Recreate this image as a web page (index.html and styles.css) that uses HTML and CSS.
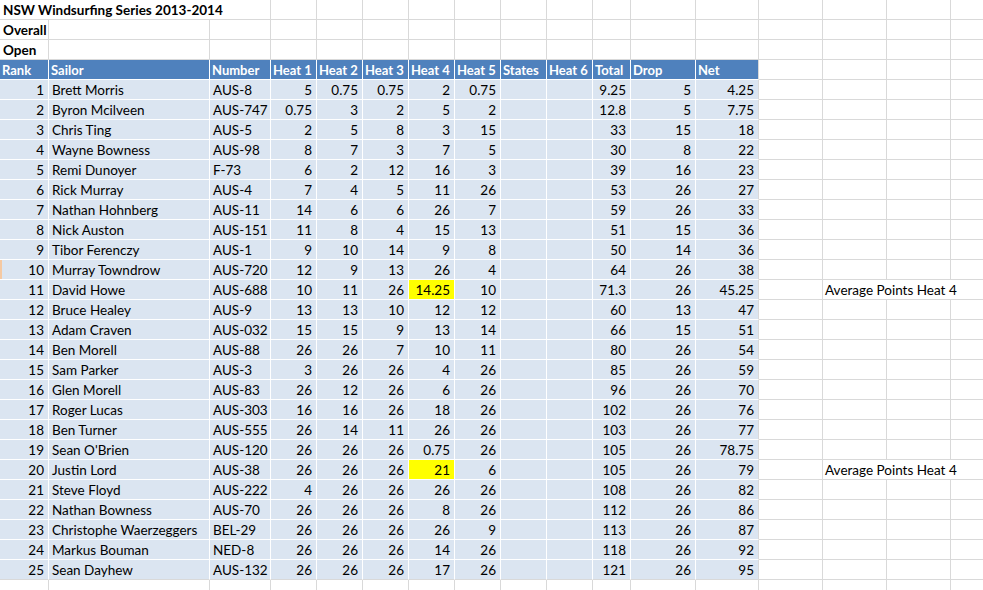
FILE: index.html
```html
<!DOCTYPE html>
<html>
<head>
<meta charset="utf-8">
<link rel="stylesheet" href="styles.css">
</head>
<body>
<div class="sheet" id="sheet">
  <div class="row">
    <div class="c b span3">NSW Windsurfing Series 2013-2014</div>
    <div class="c"></div><div class="c"></div><div class="c"></div><div class="c"></div><div class="c"></div><div class="c"></div><div class="c"></div><div class="c"></div><div class="c"></div><div class="c"></div><div class="c"></div><div class="c"></div><div class="c"></div><div class="c"></div>
  </div>
  <div class="row">
    <div class="c b">Overall</div>
    <div class="c"></div><div class="c"></div><div class="c"></div><div class="c"></div><div class="c"></div><div class="c"></div><div class="c"></div><div class="c"></div><div class="c"></div><div class="c"></div><div class="c"></div><div class="c"></div><div class="c"></div><div class="c"></div><div class="c"></div><div class="c"></div>
  </div>
  <div class="row">
    <div class="c b">Open</div>
    <div class="c"></div><div class="c"></div><div class="c"></div><div class="c"></div><div class="c"></div><div class="c"></div><div class="c"></div><div class="c"></div><div class="c"></div><div class="c"></div><div class="c"></div><div class="c"></div><div class="c"></div><div class="c"></div><div class="c"></div><div class="c"></div>
  </div>
  <div class="row">
    <div class="c h">Rank</div><div class="c h">Sailor</div><div class="c h">Number</div><div class="c h">Heat 1</div><div class="c h">Heat 2</div><div class="c h">Heat 3</div><div class="c h">Heat 4</div><div class="c h">Heat 5</div><div class="c h">States</div><div class="c h">Heat 6</div><div class="c h">Total</div><div class="c h">Drop</div><div class="c h last">Net</div>
    <div class="c"></div><div class="c"></div><div class="c"></div><div class="c"></div>
  </div>
  <div class="row"><div class="c d n">1</div><div class="c d">Brett Morris</div><div class="c d">AUS-8</div><div class="c d n">5</div><div class="c d n">0.75</div><div class="c d n">0.75</div><div class="c d n">2</div><div class="c d n">0.75</div><div class="c d n"></div><div class="c d n"></div><div class="c d n">9.25</div><div class="c d n">5</div><div class="c d n last">4.25</div><div class="c"></div><div class="c"></div><div class="c"></div><div class="c"></div></div>
  <div class="row"><div class="c d n">2</div><div class="c d">Byron Mcilveen</div><div class="c d">AUS-747</div><div class="c d n">0.75</div><div class="c d n">3</div><div class="c d n">2</div><div class="c d n">5</div><div class="c d n">2</div><div class="c d n"></div><div class="c d n"></div><div class="c d n">12.8</div><div class="c d n">5</div><div class="c d n last">7.75</div><div class="c"></div><div class="c"></div><div class="c"></div><div class="c"></div></div>
  <div class="row"><div class="c d n">3</div><div class="c d">Chris Ting</div><div class="c d">AUS-5</div><div class="c d n">2</div><div class="c d n">5</div><div class="c d n">8</div><div class="c d n">3</div><div class="c d n">15</div><div class="c d n"></div><div class="c d n"></div><div class="c d n">33</div><div class="c d n">15</div><div class="c d n last">18</div><div class="c"></div><div class="c"></div><div class="c"></div><div class="c"></div></div>
  <div class="row"><div class="c d n">4</div><div class="c d">Wayne Bowness</div><div class="c d">AUS-98</div><div class="c d n">8</div><div class="c d n">7</div><div class="c d n">3</div><div class="c d n">7</div><div class="c d n">5</div><div class="c d n"></div><div class="c d n"></div><div class="c d n">30</div><div class="c d n">8</div><div class="c d n last">22</div><div class="c"></div><div class="c"></div><div class="c"></div><div class="c"></div></div>
  <div class="row"><div class="c d n">5</div><div class="c d">Remi Dunoyer</div><div class="c d">F-73</div><div class="c d n">6</div><div class="c d n">2</div><div class="c d n">12</div><div class="c d n">16</div><div class="c d n">3</div><div class="c d n"></div><div class="c d n"></div><div class="c d n">39</div><div class="c d n">16</div><div class="c d n last">23</div><div class="c"></div><div class="c"></div><div class="c"></div><div class="c"></div></div>
  <div class="row"><div class="c d n">6</div><div class="c d">Rick Murray</div><div class="c d">AUS-4</div><div class="c d n">7</div><div class="c d n">4</div><div class="c d n">5</div><div class="c d n">11</div><div class="c d n">26</div><div class="c d n"></div><div class="c d n"></div><div class="c d n">53</div><div class="c d n">26</div><div class="c d n last">27</div><div class="c"></div><div class="c"></div><div class="c"></div><div class="c"></div></div>
  <div class="row"><div class="c d n">7</div><div class="c d">Nathan Hohnberg</div><div class="c d">AUS-11</div><div class="c d n">14</div><div class="c d n">6</div><div class="c d n">6</div><div class="c d n">26</div><div class="c d n">7</div><div class="c d n"></div><div class="c d n"></div><div class="c d n">59</div><div class="c d n">26</div><div class="c d n last">33</div><div class="c"></div><div class="c"></div><div class="c"></div><div class="c"></div></div>
  <div class="row"><div class="c d n">8</div><div class="c d">Nick Auston</div><div class="c d">AUS-151</div><div class="c d n">11</div><div class="c d n">8</div><div class="c d n">4</div><div class="c d n">15</div><div class="c d n">13</div><div class="c d n"></div><div class="c d n"></div><div class="c d n">51</div><div class="c d n">15</div><div class="c d n last">36</div><div class="c"></div><div class="c"></div><div class="c"></div><div class="c"></div></div>
  <div class="row"><div class="c d n">9</div><div class="c d">Tibor Ferenczy</div><div class="c d">AUS-1</div><div class="c d n">9</div><div class="c d n">10</div><div class="c d n">14</div><div class="c d n">9</div><div class="c d n">8</div><div class="c d n"></div><div class="c d n"></div><div class="c d n">50</div><div class="c d n">14</div><div class="c d n last">36</div><div class="c"></div><div class="c"></div><div class="c"></div><div class="c"></div></div>
  <div class="row"><div class="c d n mark">10</div><div class="c d">Murray Towndrow</div><div class="c d">AUS-720</div><div class="c d n">12</div><div class="c d n">9</div><div class="c d n">13</div><div class="c d n">26</div><div class="c d n">4</div><div class="c d n"></div><div class="c d n"></div><div class="c d n">64</div><div class="c d n">26</div><div class="c d n last">38</div><div class="c"></div><div class="c"></div><div class="c"></div><div class="c"></div></div>
  <div class="row"><div class="c d n">11</div><div class="c d">David Howe</div><div class="c d">AUS-688</div><div class="c d n">10</div><div class="c d n">11</div><div class="c d n">26</div><div class="c d n hl">14.25</div><div class="c d n">10</div><div class="c d n"></div><div class="c d n"></div><div class="c d n">71.3</div><div class="c d n">26</div><div class="c d n last">45.25</div><div class="c"></div><div class="c span3 note">Average Points Heat 4</div></div>
  <div class="row"><div class="c d n">12</div><div class="c d">Bruce Healey</div><div class="c d">AUS-9</div><div class="c d n">13</div><div class="c d n">13</div><div class="c d n">10</div><div class="c d n">12</div><div class="c d n">12</div><div class="c d n"></div><div class="c d n"></div><div class="c d n">60</div><div class="c d n">13</div><div class="c d n last">47</div><div class="c"></div><div class="c"></div><div class="c"></div><div class="c"></div></div>
  <div class="row"><div class="c d n">13</div><div class="c d">Adam Craven</div><div class="c d">AUS-032</div><div class="c d n">15</div><div class="c d n">15</div><div class="c d n">9</div><div class="c d n">13</div><div class="c d n">14</div><div class="c d n"></div><div class="c d n"></div><div class="c d n">66</div><div class="c d n">15</div><div class="c d n last">51</div><div class="c"></div><div class="c"></div><div class="c"></div><div class="c"></div></div>
  <div class="row"><div class="c d n">14</div><div class="c d">Ben Morell</div><div class="c d">AUS-88</div><div class="c d n">26</div><div class="c d n">26</div><div class="c d n">7</div><div class="c d n">10</div><div class="c d n">11</div><div class="c d n"></div><div class="c d n"></div><div class="c d n">80</div><div class="c d n">26</div><div class="c d n last">54</div><div class="c"></div><div class="c"></div><div class="c"></div><div class="c"></div></div>
  <div class="row"><div class="c d n">15</div><div class="c d">Sam Parker</div><div class="c d">AUS-3</div><div class="c d n">3</div><div class="c d n">26</div><div class="c d n">26</div><div class="c d n">4</div><div class="c d n">26</div><div class="c d n"></div><div class="c d n"></div><div class="c d n">85</div><div class="c d n">26</div><div class="c d n last">59</div><div class="c"></div><div class="c"></div><div class="c"></div><div class="c"></div></div>
  <div class="row"><div class="c d n">16</div><div class="c d">Glen Morell</div><div class="c d">AUS-83</div><div class="c d n">26</div><div class="c d n">12</div><div class="c d n">26</div><div class="c d n">6</div><div class="c d n">26</div><div class="c d n"></div><div class="c d n"></div><div class="c d n">96</div><div class="c d n">26</div><div class="c d n last">70</div><div class="c"></div><div class="c"></div><div class="c"></div><div class="c"></div></div>
  <div class="row"><div class="c d n">17</div><div class="c d">Roger Lucas</div><div class="c d">AUS-303</div><div class="c d n">16</div><div class="c d n">16</div><div class="c d n">26</div><div class="c d n">18</div><div class="c d n">26</div><div class="c d n"></div><div class="c d n"></div><div class="c d n">102</div><div class="c d n">26</div><div class="c d n last">76</div><div class="c"></div><div class="c"></div><div class="c"></div><div class="c"></div></div>
  <div class="row"><div class="c d n">18</div><div class="c d">Ben Turner</div><div class="c d">AUS-555</div><div class="c d n">26</div><div class="c d n">14</div><div class="c d n">11</div><div class="c d n">26</div><div class="c d n">26</div><div class="c d n"></div><div class="c d n"></div><div class="c d n">103</div><div class="c d n">26</div><div class="c d n last">77</div><div class="c"></div><div class="c"></div><div class="c"></div><div class="c"></div></div>
  <div class="row"><div class="c d n">19</div><div class="c d">Sean O'Brien</div><div class="c d">AUS-120</div><div class="c d n">26</div><div class="c d n">26</div><div class="c d n">26</div><div class="c d n">0.75</div><div class="c d n">26</div><div class="c d n"></div><div class="c d n"></div><div class="c d n">105</div><div class="c d n">26</div><div class="c d n last">78.75</div><div class="c"></div><div class="c"></div><div class="c"></div><div class="c"></div></div>
  <div class="row"><div class="c d n">20</div><div class="c d">Justin Lord</div><div class="c d">AUS-38</div><div class="c d n">26</div><div class="c d n">26</div><div class="c d n">26</div><div class="c d n hl">21</div><div class="c d n">6</div><div class="c d n"></div><div class="c d n"></div><div class="c d n">105</div><div class="c d n">26</div><div class="c d n last">79</div><div class="c"></div><div class="c span3 note">Average Points Heat 4</div></div>
  <div class="row"><div class="c d n">21</div><div class="c d">Steve Floyd</div><div class="c d">AUS-222</div><div class="c d n">4</div><div class="c d n">26</div><div class="c d n">26</div><div class="c d n">26</div><div class="c d n">26</div><div class="c d n"></div><div class="c d n"></div><div class="c d n">108</div><div class="c d n">26</div><div class="c d n last">82</div><div class="c"></div><div class="c"></div><div class="c"></div><div class="c"></div></div>
  <div class="row"><div class="c d n">22</div><div class="c d">Nathan Bowness</div><div class="c d">AUS-70</div><div class="c d n">26</div><div class="c d n">26</div><div class="c d n">26</div><div class="c d n">8</div><div class="c d n">26</div><div class="c d n"></div><div class="c d n"></div><div class="c d n">112</div><div class="c d n">26</div><div class="c d n last">86</div><div class="c"></div><div class="c"></div><div class="c"></div><div class="c"></div></div>
  <div class="row"><div class="c d n">23</div><div class="c d">Christophe Waerzeggers</div><div class="c d">BEL-29</div><div class="c d n">26</div><div class="c d n">26</div><div class="c d n">26</div><div class="c d n">26</div><div class="c d n">9</div><div class="c d n"></div><div class="c d n"></div><div class="c d n">113</div><div class="c d n">26</div><div class="c d n last">87</div><div class="c"></div><div class="c"></div><div class="c"></div><div class="c"></div></div>
  <div class="row"><div class="c d n">24</div><div class="c d">Markus Bouman</div><div class="c d">NED-8</div><div class="c d n">26</div><div class="c d n">26</div><div class="c d n">26</div><div class="c d n">14</div><div class="c d n">26</div><div class="c d n"></div><div class="c d n"></div><div class="c d n">118</div><div class="c d n">26</div><div class="c d n last">92</div><div class="c"></div><div class="c"></div><div class="c"></div><div class="c"></div></div>
  <div class="row lastrow"><div class="c d n">25</div><div class="c d">Sean Dayhew</div><div class="c d">AUS-132</div><div class="c d n">26</div><div class="c d n">26</div><div class="c d n">26</div><div class="c d n">17</div><div class="c d n">26</div><div class="c d n"></div><div class="c d n"></div><div class="c d n">121</div><div class="c d n">26</div><div class="c d n last">95</div><div class="c"></div><div class="c"></div><div class="c"></div><div class="c"></div></div>
  <div class="row"><div class="c"></div><div class="c"></div><div class="c"></div><div class="c"></div><div class="c"></div><div class="c"></div><div class="c"></div><div class="c"></div><div class="c"></div><div class="c"></div><div class="c"></div><div class="c"></div><div class="c"></div><div class="c"></div><div class="c"></div><div class="c"></div><div class="c"></div></div>
</div>
</body>
</html>
```
FILE: styles.css
```css
html, body {
  margin: 0;
  padding: 0;
  background: #ffffff;
  overflow: hidden;
}
.sheet {
  font-family: Lato, "Open Sans", sans-serif;
  font-size: 13.5px;
  color: #000000;
  width: 983px;
  height: 590px;
  overflow: hidden;
}
.row {
  display: grid;
  grid-template-columns: 49px 161px 61px 46px 46px 46px 46px 46px 46px 46px 38px 65px 63px 64px 64px 64px 33px;
  height: 20px;
}
.c {
  box-sizing: border-box;
  height: 20px;
  border-right: 1px solid #d9d9d9;
  border-bottom: 1px solid #d9d9d9;
  padding: 0 2px 0 3px;
  line-height: 20px;
  white-space: nowrap;
  overflow: hidden;
}
.b {
  font-weight: 700;
  overflow: visible;
}
.span3 {
  grid-column: span 3;
  overflow: visible;
}
.h {
  background: #4f81bd;
  color: #ffffff;
  font-weight: 700;
  border-right-color: #ffffff;
  border-bottom-color: #ffffff;
  padding-left: 2px;
  padding-right: 0;
  font-size: 13px;
}
.d {
  background: #dbe5f1;
  border-right-color: #ffffff;
  border-bottom-color: #ffffff;
}
.n {
  text-align: right;
  padding-right: 4px;
}
.d.last, .h.last {
  border-right-color: #d9d9d9;
}
.lastrow .d {
  border-bottom-color: #d9d9d9;
}
.hl {
  background: #ffff00;
}
.mark {
  box-shadow: inset 2px 0 0 #f5c9a2;
}
.note {
  padding-left: 2px;
}
```
